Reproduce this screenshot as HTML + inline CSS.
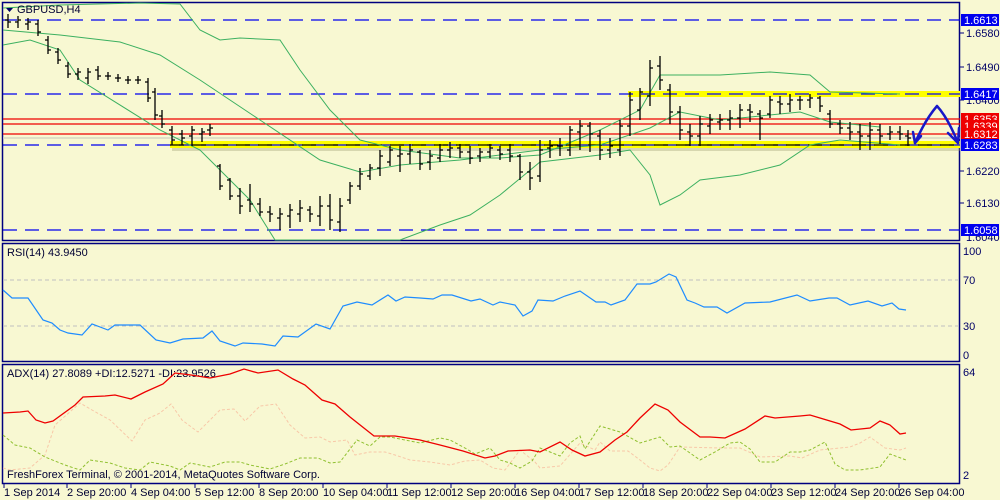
<!DOCTYPE html>
<html><head><style>
html,body{margin:0;padding:0;background:#f8f8d2;}
svg{display:block;font-family:"Liberation Sans",sans-serif;}
</style></head><body>
<svg width="1000" height="500" viewBox="0 0 1000 500" xmlns="http://www.w3.org/2000/svg">
<rect width="1000" height="500" fill="#f8f8d2"/>
<!-- panels -->
<g fill="none" stroke="#00007f" stroke-width="1.5">
<rect x="2.5" y="2.5" width="957" height="238"/>
<rect x="2.5" y="243.5" width="957" height="118"/>
<rect x="2.5" y="364.5" width="957" height="119"/>
</g>
<!-- yellow bands -->
<rect x="172" y="145" width="788" height="6" fill="#9a9a70" opacity="0.35"/>
<rect x="170" y="141" width="790" height="7" fill="#ffff00"/>
<rect x="628" y="91" width="332" height="6" fill="#ffff00"/>
<!-- horizontal lines -->
<g stroke-width="1.2" fill="none">
<line x1="3" y1="20" x2="960" y2="20" stroke="#0000ee" stroke-dasharray="14,8"/>
<line x1="3" y1="94" x2="960" y2="94" stroke="#0000ee" stroke-dasharray="14,8"/>
<line x1="3" y1="145" x2="960" y2="145" stroke="#0000ee" stroke-dasharray="14,8"/>
<line x1="170" y1="145" x2="960" y2="145" stroke="#000" stroke-dasharray="14,8"/>
<line x1="3" y1="230" x2="960" y2="230" stroke="#0000ee" stroke-dasharray="14,8"/>
<line x1="3" y1="119" x2="960" y2="119" stroke="#ee0000"/>
<line x1="3" y1="124" x2="960" y2="124" stroke="#ee0000"/>
<line x1="3" y1="134" x2="960" y2="134" stroke="#ee0000"/>
<line x1="3" y1="138" x2="960" y2="138" stroke="#d0d0c0"/>
</g>
<!-- bollinger -->
<g fill="none" stroke="#3cb060" stroke-width="1">
<polyline points="3,8 60,5 140,3 180,4 200,30 220,40 240,38 280,40 300,70 330,110 360,140 400,150 460,158 500,158 540,155 600,130 640,110 660,75 720,75 770,72 810,75 830,92 900,94"/>
<polyline points="3,30 60,35 120,42 160,55 200,80 260,120 320,160 360,172 400,165 460,160 540,150 600,145 650,128 680,112 720,120 800,112 830,122 880,127"/>
<polyline points="3,45 30,40 60,50 80,80 160,130 200,150 250,200 275,240 400,240 440,225 470,215 500,195 540,162 600,155 630,150 650,175 660,205 680,195 700,180 740,175 780,165 810,145 840,140 900,145"/>
</g>
<!-- bars -->
<path stroke="#000" stroke-width="1.3" fill="none" d="
M8 14V28M5 20H8M8 22H11 M18 16V28M15 22H18M18 20H21 M28 18V30M25 24H28M28 22H31 M38 20V36M35 24H38M38 32H41
M48 36V54M45 40H48M48 50H51 M58 48V64M55 52H58M58 60H61 M68 62V78M65 66H68M68 74H71 M78 68V80M75 74H78M78 72H81
M88 68V84M85 78H88M88 72H91 M98 66V80M95 70H98M98 76H101 M108 72V80M105 76H108M108 76H111 M118 74V82M115 78H118M118 78H121
M128 76V84M125 80H128M128 80H131 M138 76V84M135 80H138M138 80H141 M148 78V102M145 82H148M148 98H151 M155 88V120M152 92H155M155 115H158
M162 110V128M159 116H162M162 124H165 M172 126V145M169 130H172M172 140H175 M182 130V145M179 134H182M182 138H185 M192 126V146M189 136H192M192 130H195
M202 128V142M199 134H202M202 132H205 M210 124V136M207 130H210M210 128H213 M220 164V190M217 166H220M220 186H223 M230 178V200M227 180H230M230 196H233
M240 188V214M237 196H240M240 206H243 M250 184V212M247 200H250M250 204H253 M260 198V216M257 204H260M260 212H263 M270 206V222M267 212H270M270 214H273
M280 208V230M277 218H280M280 214H283 M290 204V228M287 216H290M290 210H293 M300 200V222M297 214H300M300 208H303 M310 206V222M307 210H310M310 214H313
M320 196V226M317 216H320M320 206H323 M330 194V230M327 206H330M330 220H333 M340 198V232M337 222H340M340 206H343 M350 182V204M347 200H350M350 186H353
M360 168V190M357 186H360M360 174H363 M370 164V180M367 176H370M370 168H373 M380 150V176M377 168H380M380 156H383 M390 146V166M387 162H390M390 150H393
M400 146V172M397 156H400M400 154H403 M410 144V164M407 154H410M410 150H413 M420 150V170M417 152H420M420 164H423 M430 150V170M427 162H430M430 156H433
M440 144V162M437 158H440M440 150H443 M450 142V158M447 150H450M450 148H453 M460 144V158M457 148H460M460 152H463 M470 146V164M467 152H470M470 158H473
M480 148V162M477 156H480M480 152H483 M490 144V158M487 152H490M490 148H493 M500 146V160M497 150H500M500 154H503 M510 144V162M507 150H510M510 156H513
M520 154V180M517 156H520M520 172H523 M530 162V190M527 172H530M530 178H533 M540 140V182M537 176H540M540 150H543 M550 140V158M547 148H550M550 146H553
M560 138V156M557 146H560M560 146H563 M570 126V156M567 150H570M570 130H573 M580 120V150M577 132H580M580 126H583 M590 122V152M587 126H590M590 134H593
M600 130V160M597 136H600M600 150H603 M610 138V158M607 150H610M610 146H613 M620 120V156M617 150H620M620 126H623 M630 92V136M627 126H630M630 100H633
M640 88V120M637 110H640M640 92H643 M650 60V106M647 96H650M650 68H653 M660 56V90M657 66H660M660 80H663 M670 84V124M667 90H670M670 112H673
M680 106V140M677 112H680M680 130H683 M690 124V146M687 132H690M690 136H693 M700 116V146M697 136H700M700 124H703 M710 114V134M707 126H710M710 120H713
M720 114V130M717 122H720M720 120H723 M730 110V130M727 120H730M730 118H733 M740 104V128M737 118H740M740 110H743 M750 104V122M747 110H750M750 112H753
M760 110V140M757 114H760M760 118H763 M770 96V118M767 114H770M770 100H773 M780 96V114M777 102H780M780 104H783 M790 94V112M787 104H790M790 100H793
M800 96V110M797 100H800M800 100H803 M810 94V108M807 100H810M810 98H813 M820 96V112M817 98H820M820 106H823 M830 110V128M827 114H830M830 124H833
M840 120V134M837 124H840M840 128H843 M850 122V140M847 128H850M850 132H853 M860 124V150M857 132H860M860 136H863 M870 122V150M867 136H870M870 130H873
M880 124V144M877 130H880M880 136H883 M890 126V140M887 134H890M890 132H893 M900 126V140M897 132H900M900 134H903 M908 130V146M905 136H908M908 138H911"/>
<!-- blue arrow -->
<g fill="none" stroke="#1818c8" stroke-width="2.5" stroke-linecap="round" stroke-linejoin="round">
<path d="M915,143 Q925,120 937,106 Q948,118 958,143"/>
<path d="M913,132 L915,143 L921,136"/>
<path d="M948,133 L958,143 L959,128"/>
</g>
<!-- title -->
<path d="M6 8 L13 8 L9.5 12 Z" fill="#000066"/>
<text x="17" y="13" font-size="11" fill="#000033">GBPUSD,H4</text>
<!-- right axis labels -->
<g font-size="11" fill="#000066">
<text x="966" y="37">1.6580</text>
<text x="966" y="71">1.6490</text>
<text x="966" y="104">1.6400</text>
<text x="966" y="175">1.6220</text>
<text x="966" y="207">1.6130</text>
<text x="966" y="241">1.6040</text>
</g>
<g stroke="#00007f" stroke-width="1">
<line x1="960" y1="33" x2="964" y2="33"/><line x1="960" y1="67" x2="964" y2="67"/><line x1="960" y1="100" x2="964" y2="100"/><line x1="960" y1="171" x2="964" y2="171"/><line x1="960" y1="203" x2="964" y2="203"/>
</g>
<rect x="961" y="14" width="38" height="12" fill="#0000ee"/><text x="964" y="24" font-size="11" fill="#fff">1.6613</text>
<rect x="961" y="88" width="38" height="12" fill="#0000ee"/><text x="964" y="98" font-size="11" fill="#fff">1.6417</text>
<rect x="961" y="113" width="38" height="12" fill="#ee0000"/><text x="964" y="123" font-size="11" fill="#fff">1.6353</text>
<rect x="961" y="120" width="38" height="12" fill="#ee0000"/><text x="964" y="130" font-size="11" fill="#fff">1.6339</text>
<rect x="961" y="128" width="38" height="12" fill="#ee0000"/><text x="964" y="138" font-size="11" fill="#fff">1.6312</text>
<rect x="961" y="139" width="38" height="12" fill="#0000ee"/><text x="964" y="149" font-size="11" fill="#fff">1.6283</text>
<rect x="961" y="224" width="38" height="12" fill="#0000ee"/><text x="964" y="234" font-size="11" fill="#fff">1.6058</text>
<!-- RSI -->
<g stroke="#c0c0c0" stroke-dasharray="4,3"><line x1="3" y1="280" x2="960" y2="280"/><line x1="3" y1="326" x2="960" y2="326"/></g>
<text x="7" y="256" font-size="11" fill="#000033">RSI(14) 43.9450</text>
<polyline fill="none" stroke="#1e8cff" stroke-width="1.2" points="3,290 12,298 28,298 43,320 52,323 60,330 68,333 82,335 92,324 108,330 115,325 140,325 156,340 170,343 183,339 203,338 212,331 220,341 235,346 243,343 262,344 275,346 283,336 298,337 316,324 330,329 343,306 357,302 372,305 388,295 396,301 405,297 420,298 433,299 442,295 452,295 471,301 480,299 493,305 500,302 515,305 523,316 532,311 538,300 553,301 565,296 580,291 596,302 605,302 611,305 625,300 637,284 650,284 656,282 669,274 676,277 687,300 695,303 704,307 717,307 727,313 745,303 770,302 797,295 810,301 829,298 837,298 850,305 868,301 882,306 892,303 899,309 906,310"/>
<g font-size="11" fill="#000066">
<text x="963" y="255">100</text><text x="963" y="284">70</text><text x="963" y="330">30</text><text x="963" y="359">0</text>
<text x="963" y="376">64</text><text x="963" y="479">2</text>
</g>
<!-- ADX -->
<text x="7" y="377" font-size="11" fill="#000033">ADX(14) 27.8089 +DI:12.5271 -DI:23.9526</text>
<polyline fill="none" stroke="#f8c8a8" stroke-width="1" stroke-dasharray="3,2" points="3,468 10,470 30,468 45,455 55,425 80,403 92,410 110,420 132,441 145,420 160,413 171,404 182,420 198,432 208,422 220,410 234,409 245,421 260,406 276,404 290,425 305,438 320,437 330,442 347,440 355,455 370,452 385,452 395,455 410,460 430,462 450,465 465,461 480,460 493,468 505,470 520,450 535,462 540,468 560,466 580,443 595,450 600,442 610,451 628,451 640,460 650,468 660,471 668,465 680,447 720,448 740,448 760,457 790,456 802,458 820,450 850,447 860,443 870,437 885,448 900,450 906,448"/>
<polyline fill="none" stroke="#90c030" stroke-width="1" stroke-dasharray="3,2" points="3,435 15,445 30,448 45,457 65,465 80,470 90,460 110,463 125,468 140,470 150,462 170,466 180,470 190,463 210,467 225,462 240,462 250,465 270,469 285,464 300,458 318,458 330,463 340,462 357,440 370,446 380,437 390,437 420,443 440,438 450,440 465,448 475,454 490,448 500,460 510,463 520,468 532,461 540,448 560,456 570,443 580,436 585,449 600,426 620,432 640,443 660,437 670,447 680,446 700,460 715,452 730,443 740,442 750,449 760,462 775,462 790,452 800,452 810,450 825,442 835,464 845,470 860,470 880,467 890,454 906,460"/>
<polyline fill="none" stroke="#ee0000" stroke-width="1.3" points="3,413 20,412 28,411 36,420 45,423 53,421 75,405 83,397 105,396 115,395 131,399 145,392 163,384 175,373 191,375 210,378 230,374 244,369 258,373 278,370 293,379 305,385 322,400 335,404 350,417 374,436 395,436 420,440 440,445 463,451 485,458 495,456 508,451 530,450 540,452 560,442 572,450 585,456 600,452 615,440 627,432 640,418 655,404 668,410 680,422 700,437 710,437 725,438 745,429 765,416 775,418 800,416 810,415 820,418 840,424 851,430 870,428 880,421 890,425 900,434 906,433"/>
<text x="7" y="478" font-size="11" fill="#000033">FreshForex Terminal, © 2001-2014, MetaQuotes Software Corp.</text>
<!-- time axis -->
<g stroke="#00007f"><line x1="4" y1="484" x2="4" y2="488"/><line x1="67" y1="484" x2="67" y2="488"/><line x1="131" y1="484" x2="131" y2="488"/><line x1="195" y1="484" x2="195" y2="488"/><line x1="259" y1="484" x2="259" y2="488"/><line x1="323" y1="484" x2="323" y2="488"/><line x1="387" y1="484" x2="387" y2="488"/><line x1="451" y1="484" x2="451" y2="488"/><line x1="515" y1="484" x2="515" y2="488"/><line x1="579" y1="484" x2="579" y2="488"/><line x1="643" y1="484" x2="643" y2="488"/><line x1="707" y1="484" x2="707" y2="488"/><line x1="771" y1="484" x2="771" y2="488"/><line x1="835" y1="484" x2="835" y2="488"/><line x1="899" y1="484" x2="899" y2="488"/></g>
<g font-size="11" fill="#000033">
<text x="4" y="496">1 Sep 2014</text><text x="67" y="496">2 Sep 20:00</text><text x="131" y="496">4 Sep 04:00</text><text x="195" y="496">5 Sep 12:00</text><text x="259" y="496">8 Sep 20:00</text><text x="323" y="496">10 Sep 04:00</text><text x="387" y="496">11 Sep 12:00</text><text x="451" y="496">12 Sep 20:00</text><text x="515" y="496">16 Sep 04:00</text><text x="579" y="496">17 Sep 12:00</text><text x="643" y="496">18 Sep 20:00</text><text x="707" y="496">22 Sep 04:00</text><text x="771" y="496">23 Sep 12:00</text><text x="835" y="496">24 Sep 20:00</text><text x="899" y="496">26 Sep 04:00</text>
</g>
</svg>
</body></html>
